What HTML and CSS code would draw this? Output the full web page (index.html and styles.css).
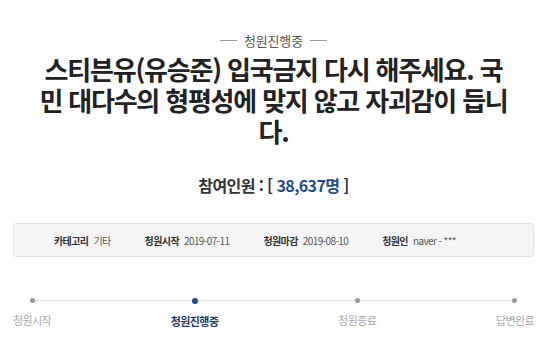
FILE: index.html
```html
<!DOCTYPE html>
<html lang="ko">
<head>
    <meta charset="UTF-8">
    <title>청원진행중</title>
    <link rel="stylesheet" href="styles.css">
</head>
<body>
    <div class="petition">
        <div class="status"><span class="status-text">청원진행중</span></div>

        <h1 class="title">스티븐유(유승준) 입국금지 다시 해주세요. 국민 대다수의 형평성에 맞지 않고 자괴감이 듭니다.</h1>

        <p class="count">참여인원 : [ <span class="count-num">38,637명</span> ]</p>

        <!-- petition info -->
        <ul class="info">
            <li><strong>카테고리</strong>기타</li>
            <li><strong>청원시작</strong>2019-07-11</li>
            <li><strong>청원마감</strong>2019-08-10</li>
            <li><strong>청원인</strong>naver - ***</li>
        </ul>

        <!-- progress steps -->
        <ol class="steps">
            <li class="step">청원시작</li>
            <li class="step active">청원진행중</li>
            <li class="step">청원종료</li>
            <li class="step">답변완료</li>
        </ol>
    </div>
</body>
</html>
```

FILE: styles.css
```css
body {
    margin: 0;
    padding: 0;
    background-color: #fff;
    font-family: "Noto Sans CJK KR", "Noto Sans", sans-serif;
    color: #333;
}

.petition {
    width: 521px;
    margin-left: 13px;
    padding-top: 22px;
}

.status {
    text-align: center;
    height: 22px;
}

.status-text {
    display: inline-flex;
    align-items: center;
    gap: 7px;
    font-size: 13px;
    line-height: 22px;
    color: #555;
    letter-spacing: -0.2px;
}

.status-text::before,
.status-text::after {
    content: "";
    width: 17px;
    height: 1px;
    background-color: #999;
}

.title {
    margin: 9px auto 0;
    width: 472px;
    font-size: 26px;
    line-height: 31px;
    font-weight: bold;
    letter-spacing: -1.2px;
    color: #222;
    text-align: center;
    word-break: break-all;
}

.count {
    margin: 27px 0 0;
    text-align: center;
    font-size: 16px;
    line-height: 24px;
    font-weight: bold;
    letter-spacing: -0.6px;
    color: #333;
}

.count-num {
    color: #1f4c8c;
}

.info {
    list-style: none;
    margin: 26px 0 0;
    padding: 0 0 0 40px;
    height: 32px;
    display: flex;
    align-items: center;
    gap: 34px;
    background-color: #f5f5f5;
    border: 1px solid #e3e3e3;
    border-radius: 3px;
    font-size: 10px;
    color: #555;
    letter-spacing: -0.6px;
}

.info strong {
    color: #333;
    margin-right: 5px;
}

.steps {
    list-style: none;
    margin: 41px 0 0;
    padding: 0;
    display: flex;
    justify-content: space-between;
    position: relative;
}

.steps::before {
    content: "";
    position: absolute;
    top: 2px;
    left: 17px;
    right: 17px;
    height: 1px;
    background-color: #ddd;
}

.step {
    display: flex;
    flex-direction: column;
    align-items: center;
    gap: 9px;
    font-size: 11px;
    line-height: 16px;
    color: #aaa;
    letter-spacing: -0.6px;
    position: relative;
}

.step::before {
    content: "";
    width: 5px;
    height: 5px;
    border-radius: 50%;
    background-color: #999;
}

.step.active {
    color: #1f3d6b;
    font-weight: bold;
}

.step.active::before {
    width: 6px;
    height: 6px;
    background-color: #1f4c8c;
}
```
